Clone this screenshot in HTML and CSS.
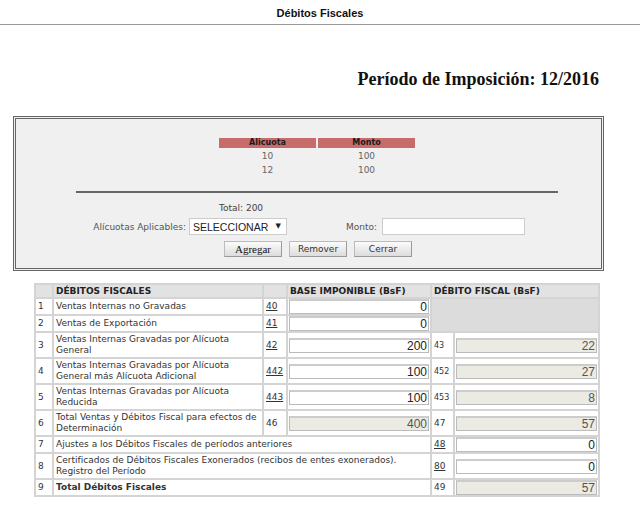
FILE: index.html
```html
<!DOCTYPE html>
<html lang="es">
<head>
  <meta charset="UTF-8">
  <title>Débitos Fiscales</title>
  <link rel="stylesheet" href="styles.css">
</head>
<body>
  <div class="barra-titulo">Débitos Fiscales</div>

  <div class="periodo">Período de Imposición: 12/2016</div>

  <div class="panel">
    <table class="alicuotas">
      <tr><th>Alicuota</th><th>Monto</th></tr>
      <tr><td>10</td><td>100</td></tr>
      <tr><td>12</td><td>100</td></tr>
    </table>

    <hr class="separador">

    <div class="total">Total: 200</div>

    <div class="fila-form">
      <label class="lbl-alicuota">Alícuotas Aplicables:</label>
      <span class="combo"><select><option>SELECCIONAR</option></select></span>
      <label class="lbl-monto">Monto:</label>
      <input type="text" class="txt-monto">
    </div>

    <div class="botones">
      <button type="button" class="serif">Agregar</button>
      <button type="button">Remover</button>
      <button type="button">Cerrar</button>
    </div>
  </div>

  <table class="debitos">
    <colgroup>
      <col style="width:16px">
      <col style="width:208px">
      <col style="width:22px">
      <col style="width:142px">
      <col style="width:21px">
      <col style="width:143px">
    </colgroup>
    <tr class="cab">
      <th></th>
      <th>DÉBITOS FISCALES</th>
      <th></th>
      <th>BASE IMPONIBLE (BsF)</th>
      <th colspan="2">DÉBITO FISCAL (BsF)</th>
    </tr>
    <tr>
      <td>1</td>
      <td>Ventas Internas no Gravadas</td>
      <td><a href="#">40</a></td>
      <td><input type="text" value="0"></td>
      <td colspan="2" rowspan="2" class="vacio"></td>
    </tr>
    <tr>
      <td>2</td>
      <td>Ventas de Exportación</td>
      <td><a href="#">41</a></td>
      <td><input type="text" value="0"></td>
    </tr>
    <tr class="doble">
      <td>3</td>
      <td>Ventas Internas Gravadas por Alícuota General</td>
      <td><a href="#">42</a></td>
      <td><input type="text" value="200"></td>
      <td class="cod">43</td>
      <td><input type="text" value="22" class="off" readonly></td>
    </tr>
    <tr class="doble">
      <td>4</td>
      <td>Ventas Internas Gravadas por Alícuota General más Alícuota Adicional</td>
      <td><a href="#">442</a></td>
      <td><input type="text" value="100"></td>
      <td class="cod">452</td>
      <td><input type="text" value="27" class="off" readonly></td>
    </tr>
    <tr class="doble">
      <td>5</td>
      <td>Ventas Internas Gravadas por Alícuota Reducida</td>
      <td><a href="#">443</a></td>
      <td><input type="text" value="100"></td>
      <td class="cod">453</td>
      <td><input type="text" value="8" class="off" readonly></td>
    </tr>
    <tr class="doble">
      <td>6</td>
      <td>Total Ventas y Débitos Fiscal para efectos de Determinación</td>
      <td>46</td>
      <td><input type="text" value="400" class="off" readonly></td>
      <td>47</td>
      <td><input type="text" value="57" class="off" readonly></td>
    </tr>
    <tr>
      <td>7</td>
      <td colspan="3">Ajustes a los Débitos Fiscales de períodos anteriores</td>
      <td><a href="#">48</a></td>
      <td><input type="text" value="0"></td>
    </tr>
    <tr class="doble">
      <td>8</td>
      <td colspan="3">Certificados de Débitos Fiscales Exonerados (recibos de entes exonerados). Registro del Período</td>
      <td><a href="#">80</a></td>
      <td><input type="text" value="0"></td>
    </tr>
    <tr>
      <td>9</td>
      <td colspan="3"><strong>Total Débitos Fiscales</strong></td>
      <td>49</td>
      <td><input type="text" value="57" class="off" readonly></td>
    </tr>
  </table>
</body>
</html>
```

FILE: styles.css
```css
body {
  margin: 0;
  font-family: "DejaVu Sans", Verdana, sans-serif;
  font-size: 9px;
  color: #333;
  background: #fff;
}
.barra-titulo {
  height: 24px;
  line-height: 26px;
  text-align: center;
  font-family: "Liberation Sans", Arial, sans-serif;
  font-weight: bold;
  font-size: 11px;
  color: #111;
  border-bottom: 1px solid #999;
}
.periodo {
  margin-top: 44px;
  padding-right: 41px;
  text-align: right;
  font-family: "Liberation Serif", "Times New Roman", serif;
  font-weight: bold;
  font-size: 18px;
  line-height: 21px;
  color: #111;
}
.panel {
  box-sizing: border-box;
  width: 591px;
  height: 155px;
  margin: 26px 0 0 13px;
  padding-top: 17px;
  background: #eff0ef;
  border: 3px double #666;
}
.alicuotas {
  margin-left: 201px;
  border-spacing: 2px;
  font-size: 9px;
}
.alicuotas th {
  width: 97px;
  height: 10px;
  padding: 0;
  background: #c86b6b;
  color: #1a1a1a;
  font-size: 8px;
  line-height: 10px;
}
.alicuotas td {
  height: 12px;
  padding: 0;
  text-align: center;
  color: #666;
  line-height: 12px;
}
.separador {
  width: 482px;
  margin: 13px 0 0 60px;
  border: 0;
  border-top: 2px solid #666;
  height: 0;
}
.total {
  margin: 8px 0 0 203px;
  line-height: 14px;
  color: #444;
}
.fila-form {
  display: flex;
  align-items: center;
  margin: 3px 0 0 72px;
  height: 17px;
  color: #555;
}
.lbl-alicuota {
  width: 98px;
  text-align: right;
}
.combo {
  position: relative;
  margin-left: 3px;
  width: 98px;
  height: 17px;
}
.combo select {
  appearance: none;
  -webkit-appearance: none;
  box-sizing: border-box;
  width: 98px;
  height: 17px;
  padding: 0 0 0 3px;
  border: 1px solid #ccc;
  background: #fff;
  font-family: "Liberation Sans", Arial, sans-serif;
  font-size: 10.5px;
  color: #222;
}
.combo::after {
  content: "▼";
  position: absolute;
  right: 6px;
  top: 4px;
  font-size: 7px;
  color: #222;
}
.lbl-monto {
  margin-left: 59px;
  width: 33px;
}
.txt-monto {
  box-sizing: border-box;
  margin-left: 3px;
  width: 143px;
  height: 17px;
  border: 1px solid #ccc;
  background: #fff;
}
.botones {
  display: flex;
  gap: 7px;
  margin: 6px 0 0 208px;
}
button {
  height: 16px;
  width: 58px;
  padding: 0;
  font-family: "DejaVu Sans", Verdana, sans-serif;
  font-size: 9px;
  color: #333;
  background: linear-gradient(#fbfbfb, #dcdcdc);
  border: 1px solid #999;
  border-top-color: #bbb;
  border-left-color: #bbb;
}
button.serif {
  font-family: "Liberation Serif", "Times New Roman", serif;
  font-size: 11px;
  color: #111;
}
.debitos {
  margin: 12px 0 0 34px;
  table-layout: fixed;
  width: 566px;
  border-spacing: 2px;
  background: #d4d4d4;
}
.debitos td, .debitos th {
  padding: 0 2px;
  background: #fff;
  line-height: 11px;
  height: 15px;
  vertical-align: middle;
  text-align: left;
  overflow: hidden;
}
.debitos tr.doble td {
  height: 24px;
}
.debitos th {
  background: #e2e2e2;
  color: #222;
  font-size: 9px;
  height: 12px;
}
.debitos td.vacio {
  background: #dcdcdc;
}
.debitos td.cod {
  font-size: 8px;
}
.debitos a {
  color: #333;
}
.debitos td input {
  box-sizing: border-box;
  width: 100%;
  height: 15px;
  margin: 0;
  padding: 0 1px;
  text-align: right;
  font-family: "Liberation Sans", Arial, sans-serif;
  font-size: 12px;
  line-height: 12px;
  color: #222;
  background: #fff;
  border: 1px solid #bbb;
  border-top: 2px solid #ccc;
  display: block;
}
.debitos td input.off {
  background: #ebebe4;
  color: #555;
}
.debitos td:has(input) {
  padding: 0 1px;
}
```
